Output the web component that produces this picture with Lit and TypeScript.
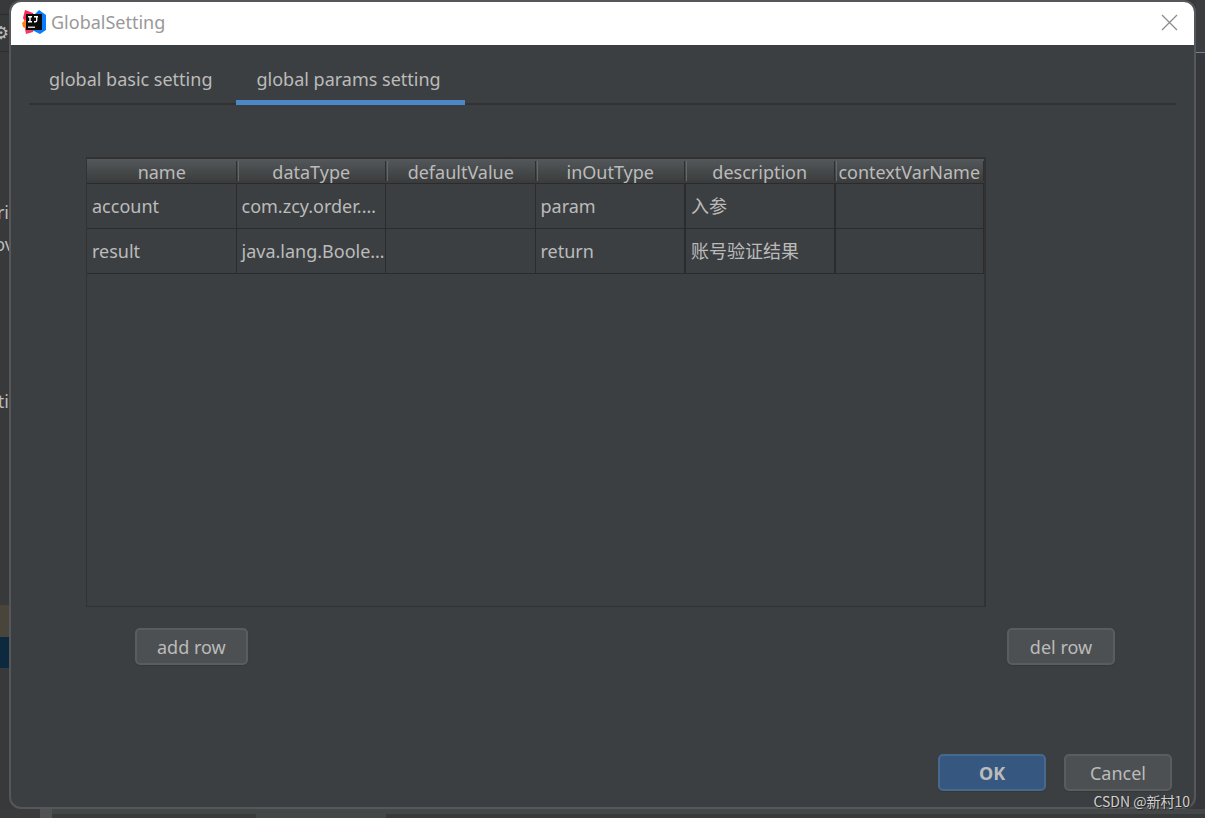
import { LitElement, html, css, svg } from "lit";
import { customElement, state } from "lit/decorators.js";

const COLUMNS = ["name", "dataType", "defaultValue", "inOutType", "description", "contextVarName"];

const INITIAL_ROWS = [
  ["account", "com.zcy.order.model.Account", "", "param", "入参", ""],
  ["result", "java.lang.Boolean", "", "return", "账号验证结果", ""],
];

const ideaLogo = svg`
  <svg class="logo" viewBox="0 0 24 24" aria-hidden="true">
    <path d="M3 0 L11 3 L13 12 L4 14 L1 8 Z" fill="#fe2857"/>
    <path d="M0 13 L4 9 L9 15 L5 19 L1 17 Z" fill="#fc801d"/>
    <path d="M4 16 L12 17 L11 22 L4 24 L3 19 Z" fill="#f23b62"/>
    <path d="M12 5 L17 0 L24 5 V20 L18 24 L10 20 Z" fill="#087cfa"/>
    <rect x="4" y="4" width="16" height="16" fill="#0b0b0b"/>
    <path d="M6 6.700h4M8 6.700v5M6 11.700h4M12 6.700h4M14.700 6.700v3.700q0 1.400-1.500 1.400h-1.200" fill="none" stroke="#fff" stroke-width="1.400"/>
    <rect x="6" y="16.600" width="7" height="1.200" fill="#fff"/>
  </svg>`;

@customElement("app-root")
export class AppRoot extends LitElement {
  @state() private rows = INITIAL_ROWS;
  @state() private tab = 1;

  static styles = css`
    :host {
      display: grid;
      grid-template-columns: 9px minmax(0, 1fr) 9px;
      grid-template-rows: minmax(0, 1fr) 9px;
      height: 100vh;
      position: relative;
      overflow: hidden;
      box-sizing: border-box;
      background: #38393b;
      color: #bbbbbb;
      font: 18px/24px "Noto Sans", "Noto Sans CJK SC", sans-serif;
    }
    * { box-sizing: border-box; }
    button { font: inherit; color: inherit; margin: 0; }

    .gutter { display: flex; flex-direction: column; overflow: hidden; }
    .gutter span { display: flex; justify-content: flex-end; height: 32px; line-height: 32px; flex: none; }
    .gutter .cut { margin-right: -5px; }
    .gutter .bar { height: 38px; line-height: 34px; border-top: 1px solid #2c2d2e; border-bottom: 1px solid #2c2d2e; }
    .gutter .tools { height: 14px; }
    .gutter .gap { height: 144px; }
    .gutter .after { height: 125px; }
    .gutter .last { height: 188px; }
    .gutter .warn { height: 32px; background: #49453a; }
    .gutter .picked { height: 31px; background: #0d293e; }
    .right .rule { height: 53px; border-bottom: 1px solid #6f8799; background: #3b3e40; }
    .right { background: #35373a; }

    .status { grid-column: 1 / -1; display: flex; background: #444748; }
    .status i { height: 9px; }
    .status .a { width: 40px; background: #393b3d; }
    .status .b { width: 12px; background: #505254; }
    .status .c { width: 204px; background: #3a3c3c; border-top: 5px solid #444748; }
    .status .d { width: 130px; }
    .status .e { flex: 1; background: #37393a; border-top: 5px solid #444748; }

    .dialog {
      display: flex;
      flex-direction: column;
      border: 2px solid #55575a;
      border-radius: 12px;
      background: #3c3f41;
      overflow: hidden;
    }
    .titlebar {
      display: flex;
      align-items: center;
      gap: 5px;
      height: 43px;
      flex: none;
      padding: 0 16px 3px 11px;
      background: #fff;
      color: #999;
    }
    .titlebar h1 { flex: 1; margin: 0; font-size: 18px; font-weight: 400; }
    .logo { width: 24px; height: 24px; }
    .close { display: flex; padding: 0; border: 0; background: none; }
    .close svg { width: 17px; height: 17px; }

    .tabs { display: flex; margin: 0 18px; padding-top: 12px; flex: none; border-bottom: 2px solid #323232; }
    .tab {
      padding: 10px 24px 9px 20px;
      margin-bottom: -2px;
      border: 0;
      border-bottom: 5px solid transparent;
      background: none;
      white-space: nowrap;
    }
    .tab.on { border-bottom-color: #4a88c7; }

    .panel { flex: 1; display: flex; flex-direction: column; padding: 52px 79px 0 75px; }
    .frame {
      height: 450px;
      margin-right: 129px;
      border: 1px solid #323232;
      border-top-width: 2px;
      border-right-width: 2px;
    }
    table { width: 100%; table-layout: fixed; border-collapse: separate; border-spacing: 0; }
    th {
      height: 25px;
      padding: 2px 0 0;
      font-weight: 400;
      line-height: 22px;
      text-align: center;
      white-space: nowrap;
      border-bottom: 1px solid #2b2b2b;
      background:
        linear-gradient(#2e2f30, #2e2f30) right 0 top 2px / 1px 20px no-repeat,
        linear-gradient(#656869, #656869) left 1px top 2px / 1px 20px no-repeat,
        linear-gradient(#54585a, #393b3c);
    }
    th:first-child {
      background:
        linear-gradient(#2e2f30, #2e2f30) right 0 top 2px / 1px 20px no-repeat,
        linear-gradient(#54585a, #393b3c);
    }
    td {
      height: 45px;
      padding: 0 0 0 5px;
      border-right: 1px solid #2b2b2b;
      border-bottom: 1px solid #2b2b2b;
      overflow: hidden;
      white-space: nowrap;
      text-overflow: ellipsis;
    }
    td:nth-child(n + 5) { border-left: 1px solid #2b2b2b; }
    .row-actions { display: flex; justify-content: space-between; padding: 21px 0 0 49px; }
    .btn {
      min-width: 108px;
      height: 37px;
      padding: 0 20px;
      border: 2px solid #5a5d5e;
      border-radius: 5px;
      background: #4c5052;
      box-shadow: 0 1px 1px #363839;
    }
    .btn.primary { border-color: #456a8e; background: #365880; font-weight: 700; }
    .footer { display: flex; justify-content: flex-end; gap: 18px; padding: 0 22px 16px; }
    .watermark {
      position: absolute;
      right: 15px;
      bottom: 7px;
      font: 14px/20px "Noto Sans CJK SC", "Liberation Sans", sans-serif;
      color: #d0d0d0;
      text-shadow: 1px 1px 1px #222;
    }
  `;

  private addRow() {
    this.rows = [...this.rows, COLUMNS.map(() => "")];
  }

  private delRow() {
    this.rows = this.rows.slice(0, -1);
  }

  render() {
    return html`
      <div class="gutter">
        <span class="tools"></span><span class="bar">⚙</span><span class="gap"></span>
        <span>eri</span><span class="cut">ov</span><span class="after"></span><span>ti</span>
        <span class="last"></span><span class="warn"></span><span class="picked"></span>
      </div>
      <main class="dialog" role="dialog" aria-labelledby="title">
        <header class="titlebar">
          ${ideaLogo}
          <h1 id="title">GlobalSetting</h1>
          <button class="close" aria-label="Close">
            <svg viewBox="0 0 17 17"><path d="M1 1 L16 16 M16 1 L1 16" stroke="#8c8c8c" stroke-width="1.300" fill="none"/></svg>
          </button>
        </header>
        <nav class="tabs" role="tablist">
          ${["global basic setting", "global params setting"].map(
            (label, i) => html`<button class="tab ${i === this.tab ? "on" : ""}" role="tab"
              aria-selected=${i === this.tab} @click=${() => (this.tab = i)}>${label}</button>`
          )}
        </nav>
        <section class="panel">
          <div class="frame">
            <table>
              <thead><tr>${COLUMNS.map((c) => html`<th scope="col">${c}</th>`)}</tr></thead>
              <tbody>
                ${this.rows.map((r) => html`<tr>${r.map((v) => html`<td>${v}</td>`)}</tr>`)}
              </tbody>
            </table>
          </div>
          <div class="row-actions">
            <button class="btn" @click=${this.addRow}>add row</button>
            <button class="btn" @click=${this.delRow}>del row</button>
          </div>
        </section>
        <footer class="footer">
          <button class="btn primary">OK</button>
          <button class="btn">Cancel</button>
        </footer>
      </main>
      <div class="gutter right"><span class="rule"></span></div>
      <div class="status"><i class="a"></i><i class="b"></i><i class="c"></i><i class="d"></i><i class="e"></i></div>
      <div class="watermark">CSDN @新村10</div>
    `;
  }
}
